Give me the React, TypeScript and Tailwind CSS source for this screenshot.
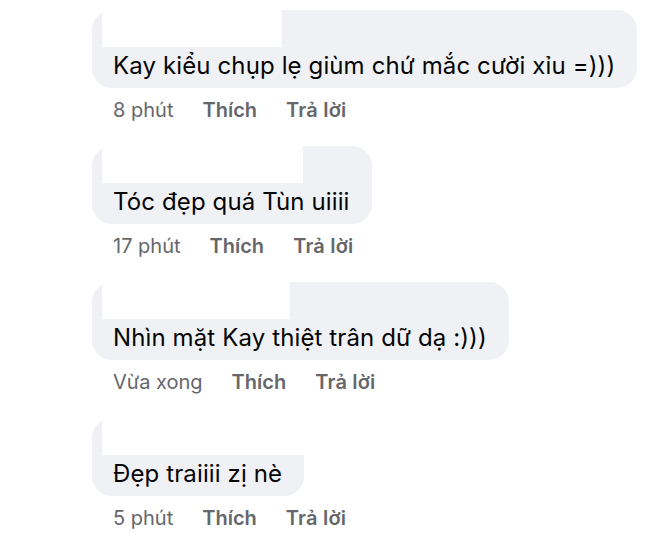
const comments = [
  { text: 'Kay kiểu chụp lẹ giùm chứ mắc cười xỉu =)))', time: '8 phút', nameW: 'w-[180px]' },
  { text: 'Tóc đẹp quá Tùn uiiii', time: '17 phút', nameW: 'w-[201px]' },
  { text: 'Nhìn mặt Kay thiệt trân dữ dạ :)))', time: 'Vừa xong', nameW: 'w-[188px]' },
  { text: 'Đẹp traiiii zị nè', time: '5 phút', nameW: 'self-stretch' },
];

function Comment({ text, time, nameW }: { text: string; time: string; nameW: string }) {
  return (
    <div className="flex flex-col items-start">
      {/* bubble, name hidden behind a white block */}
      <div className="flex flex-col items-start rounded-[20px] bg-[#f0f1f5]">
        <div className={`h-[37px] ml-[10px] bg-white ${nameW}`}></div>
        <p className="pl-[21px] pr-[22px] pt-[4px] pb-[7px] text-[24px] leading-[30px] tracking-[0.12px] text-[#050505] whitespace-nowrap">
          {text}
        </p>
      </div>
      <div className="mt-[8px] flex gap-[29px] pl-[21px] text-[20px] leading-[28px] text-[#65676b]">
        <span>{time}</span>
        <span className="font-semibold">Thích</span>
        <span className="font-semibold tracking-[0.2px]">Trả lời</span>
      </div>
    </div>
  );
}

export default function App() {
  return (
    <div
      className="w-[660px] h-[538px] overflow-hidden bg-white pl-[92px] pt-[10px] flex flex-col gap-[22px]"
      style={{ fontFamily: 'Inter, "Liberation Sans", sans-serif' }}
    >
      {comments.map((c) => (
        <Comment key={c.text} {...c} />
      ))}
    </div>
  );
}
